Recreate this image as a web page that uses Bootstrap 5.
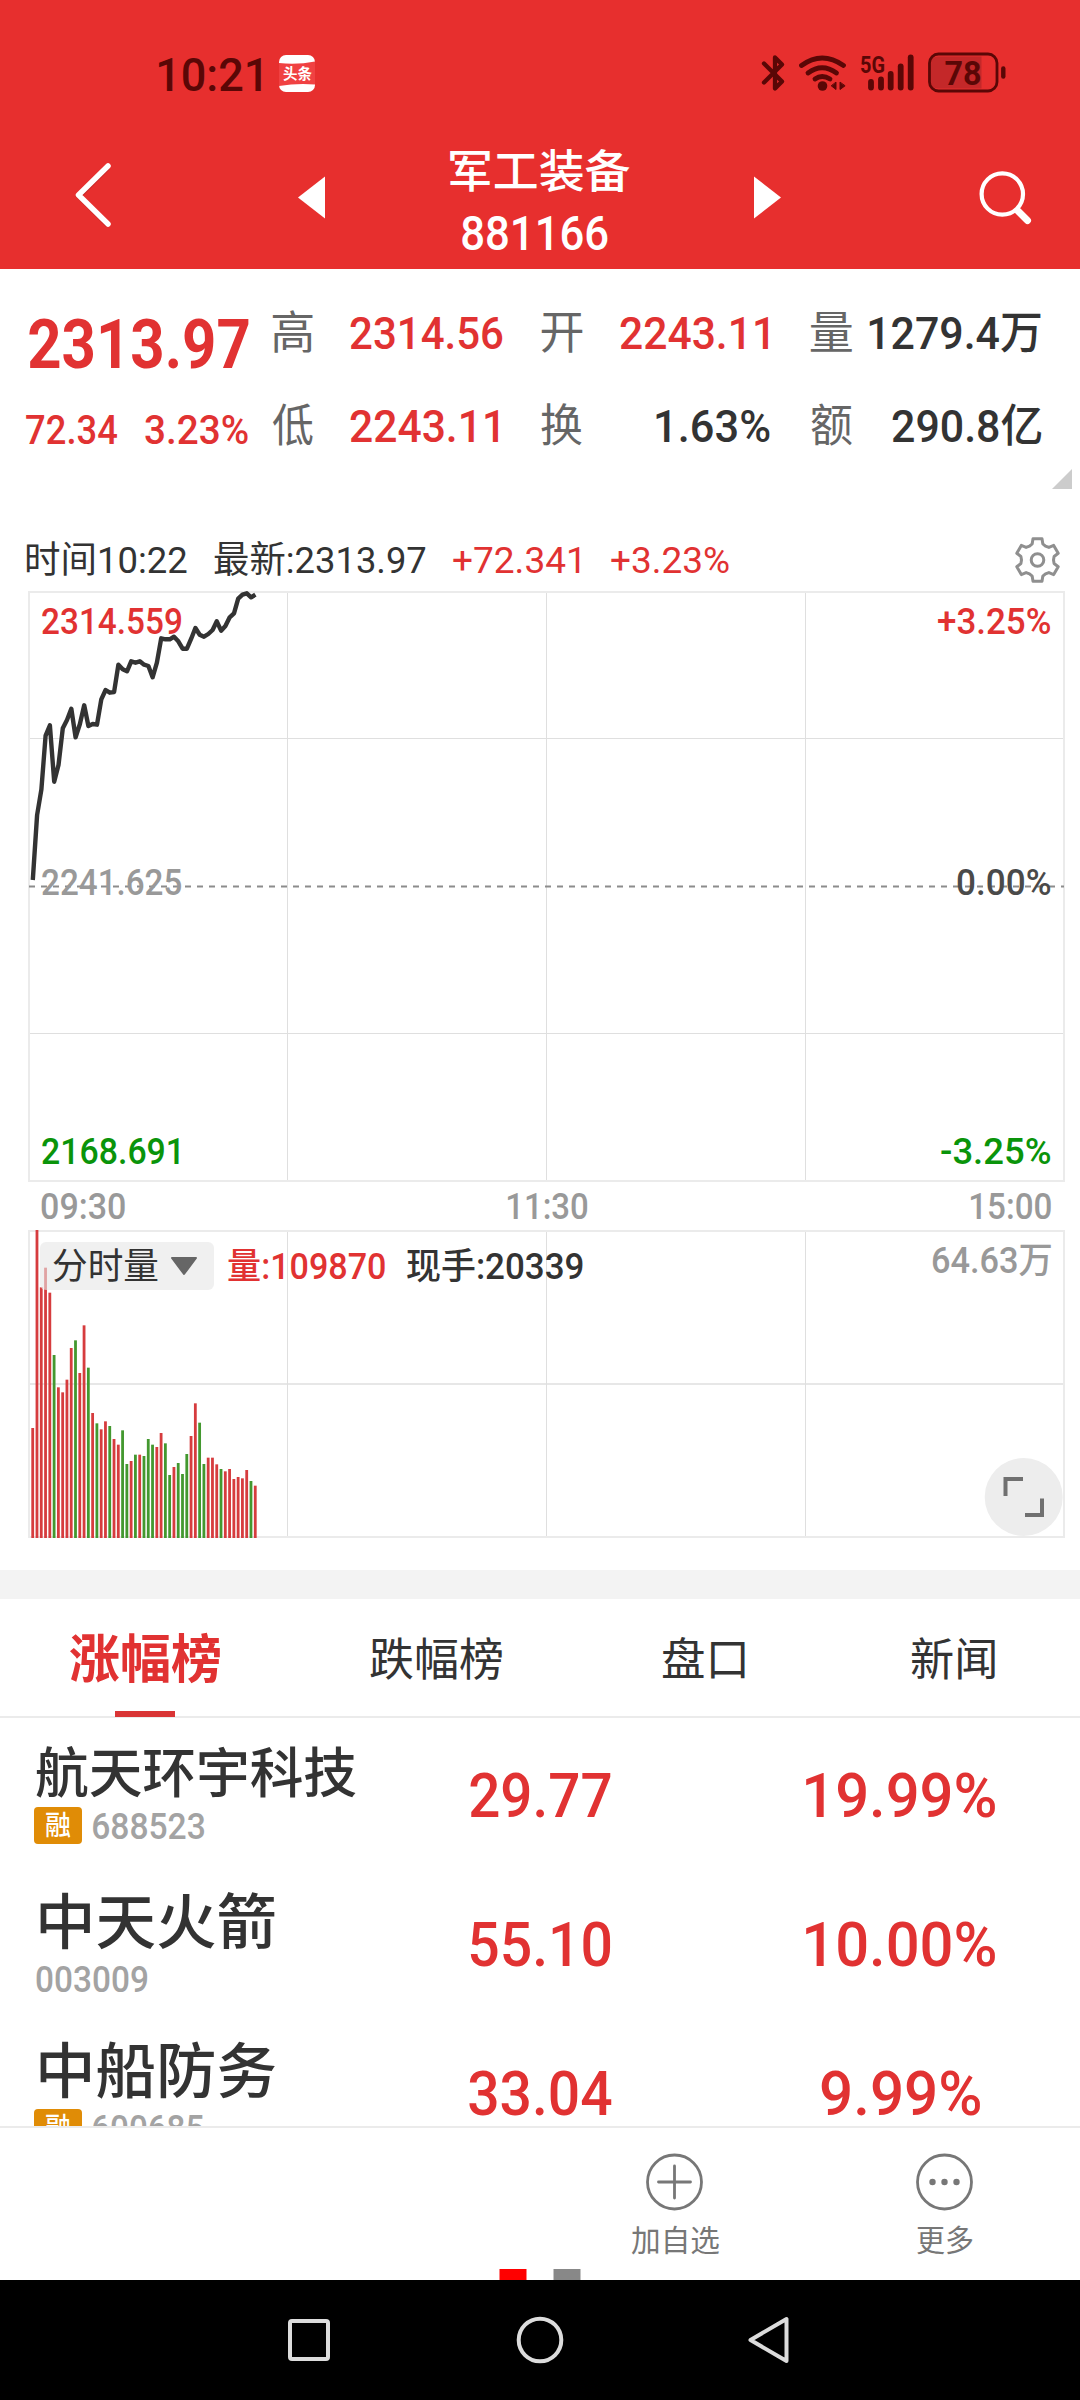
<!DOCTYPE html>
<html lang="zh-CN">
<head>
<meta charset="utf-8">
<meta name="viewport" content="width=device-width, initial-scale=1">
<title>军工装备 881166</title>
<link rel="stylesheet" href="https://cdn.jsdelivr.net/npm/bootstrap@5.3.0/dist/css/bootstrap.min.css">
<style>
:root{--up:#e13232;--down:#0a940a;--ink:#333;--mute:#999;--rule:#e6e6e6}
body{width:1080px;height:2400px;margin:0;overflow:hidden;background:#fff;color:var(--ink);font-family:Roboto,"Noto Sans CJK SC",sans-serif;font-weight:500;line-height:1}
svg{display:block;flex:none}
.fit{display:block;flex:none;white-space:nowrap;height:1em;line-height:1em}
.fit>span{display:inline-block;transform-origin:0 50%}
.up{color:var(--up)}.down{color:var(--down)}.mute{color:var(--mute)}
.s30{font-size:30px}.s36{font-size:36px}.s37{font-size:37px}.s41{font-size:41px}.s45{font-size:45px}.s47{font-size:47px}.s48{font-size:48px}.s52{font-size:52px}.s54{font-size:54px}.s60{font-size:60px}.s62{font-size:62px}.s68{font-size:68px}
.topbar{height:269px;background:#e72f2e}
.statusbar{height:146px;color:#5a0706;padding-left:158px;padding-right:74px}
.toutiao{margin-left:18px}
.toolrow{padding-top:1px}
.title-col{width:280px}
.title-col .name-line{height:48px}
.title-col .code-line{height:62px;margin-top:7px;padding-right:11px}
.quote{height:262px;padding-top:42px}
.price-col{width:273px;padding-left:26px}
.price-line{height:66px}.change-line{height:104px;gap:27px}
.pair-col{width:231px;margin-right:39px}
.pair-col:last-child{margin-right:0}
.pair-col>div{height:42px}
.pair-col>div+div{margin-top:51px}
.lbl{color:#666;font-weight:400}
.corner{right:8px;top:200px}
.info{height:61px;padding-left:26px;padding-right:19px;padding-bottom:4px}
.over{position:absolute;inset:0;font-size:36px}
.charts{height:978px}
.chip{width:174px;height:48px;border-radius:6px;background:rgba(230,230,230,.6);padding-left:13px;gap:12px;font-weight:400}
.band{height:29px;background:#f3f3f3}
.tabs{height:119px;border-bottom:2px solid #ebebeb}
.tabs>div{height:118px;position:relative;padding-top:4px}
.tabs .on::after{content:"";position:absolute;left:45px;bottom:0;width:60px;height:6px;background:#d93435}
.stocks{height:408px;overflow:hidden}
.stock{height:149px}
.c-name{width:470px;padding-left:34px;padding-top:28px}
.c-name .n{height:56px;font-weight:500}
.c-name .m{height:37px;gap:11px;margin-top:5px;color:#a3a3a3}
.c-name .m>.fit{margin-top:1px}
.stock.big .c-name{padding-top:26px}
.stock.big .n{height:60px}
.stock.big .m{margin-top:7px}
.rong{width:48px;height:37px;background:#e08c06;border-radius:4px;color:#fff;font-size:27px}
.c-num{height:153px}
.c-price{width:141px}
.c-pct{width:264px;margin-left:157px}
.toolbar2{height:154px;border-top:2px solid #ebebeb;color:#777;font-weight:400}
.toolbar2 .act{width:270px;padding-top:25px}
.toolbar2 .fit{margin-top:14px}
.sysnav{height:120px;background:#000}
</style>
</head>
<body>
<header class="topbar text-white">
  <div class="statusbar d-flex align-items-center">
    <span class="fit s47" data-w="103">10:21</span>
    <svg class="toutiao" width="37" height="37" viewBox="0 0 37 37"><rect width="36" height="37" rx="7" fill="#fff"/><path d="M0 8Q18 10 36 6.500V29.500Q18 28 0 31Z" fill="#f04142"/><text x="4" y="24" font-size="14.500" font-weight="700" textLength="29" lengthAdjust="spacingAndGlyphs" fill="#fff" font-family="Noto Sans CJK SC">头条</text></svg>
    <svg class="ms-auto" width="246" height="44" viewBox="760 51.500 246 44" fill="none" stroke="#5a0706" stroke-linecap="round" stroke-linejoin="round">
      <path d="M764 64L782 82L775 89V58L782 65L764 83" stroke-width="4.300"/>
      <g stroke-width="4.800"><path d="M801.500 66Q822 51 843.500 66"/><path d="M808 73.500Q822 63 836.500 73.500"/><path d="M815 79.500Q822 74.500 830 79.500"/></g>
      <circle cx="822.500" cy="86.500" r="4.800" fill="#5a0706" stroke="none"/>
      <path d="M836 83V90L831.500 86.500ZM840 83V90L844.800 86.500Z" fill="#5a0706" stroke-width="1"/>
      <text x="860" y="73" font-size="24" font-weight="700" textLength="25" lengthAdjust="spacingAndGlyphs" fill="#5a0706" stroke="none" font-family="Roboto">5G</text>
      <g stroke-width="5.800"><path d="M871 82.500V88"/><path d="M881 80V88"/><path d="M890.700 74.500V88"/><path d="M900.700 67V88"/><path d="M910.700 58V88"/></g>
      <path d="M938 57H981.500V89H938Q931 89 931 82V64Q931 57 938 57Z" fill="#c42829" stroke="none"/>
      <rect x="929.500" y="54.500" width="67.500" height="37" rx="9" stroke-width="2.800"/>
      <path d="M1003.300 69V77" stroke-width="4.400"/>
      <text x="944.500" y="85" font-size="34" font-weight="700" textLength="37" lengthAdjust="spacingAndGlyphs" fill="#5a0706" stroke="none" font-family="Roboto">78</text>
    </svg>
  </div>
  <div class="toolrow d-flex align-items-start">
    <svg width="180" height="100" viewBox="0 147 180 100"><path d="M108 167L79 196L108 225" fill="none" stroke="#8a1414" stroke-opacity=".35" stroke-width="5.500"/><path d="M108 166L78.500 195L108 224" fill="none" stroke="#fff" stroke-width="5.500" stroke-linecap="round" stroke-linejoin="round"/></svg>
    <svg width="220" height="100" viewBox="180 147 220 100"><path d="M298 197.500L325 176.500V218.500Z" fill="#fff"/></svg>
    <div class="title-col">
      <div class="name-line d-flex align-items-center justify-content-center"><span class="fit s45" data-w="180.500">军工装备</span></div>
      <div class="code-line d-flex align-items-center justify-content-center"><span class="fit s48" data-w="146">881166</span></div>
    </div>
    <svg width="200" height="100" viewBox="680 147 200 100"><path d="M781 197.500L754 176.500V218.500Z" fill="#fff"/></svg>
    <svg width="200" height="100" viewBox="880 147 200 100" fill="none" stroke="#fff"><circle cx="1002.300" cy="194" r="20.700" stroke-width="4.200"/><path d="M1018 211L1027.500 220.500" stroke-width="7" stroke-linecap="round"/></svg>
  </div>
</header>

<section class="quote d-flex align-items-start position-relative">
  <div class="price-col">
    <div class="price-line d-flex align-items-center"><span class="fit s68 up fw-bold" data-w="220" data-x="2.500">2313.97</span></div>
    <div class="change-line d-flex align-items-center up"><span class="fit s41" data-w="91.500">72.34</span><span class="fit s41" data-w="103">3.23%</span></div>
  </div>
  <div class="pair-col">
    <div class="d-flex align-items-center justify-content-between"><span class="fit s45 lbl" data-w="41">高</span><span class="fit s45 up" data-w="152.500">2314.56</span></div>
    <div class="d-flex align-items-center justify-content-between"><span class="fit s45 lbl" data-w="41">低</span><span class="fit s45 up me-1" data-w="148">2243.11</span></div>
  </div>
  <div class="pair-col">
    <div class="d-flex align-items-center justify-content-between"><span class="fit s45 lbl" data-w="41">开</span><span class="fit s45 up me-1" data-w="148">2243.11</span></div>
    <div class="d-flex align-items-center justify-content-between"><span class="fit s45 lbl" data-w="41">换</span><span class="fit s45" data-w="114" style="margin-right:2px">1.63%</span></div>
  </div>
  <div class="pair-col">
    <div class="d-flex align-items-center justify-content-between"><span class="fit s45 lbl" data-w="41">量</span><span class="fit s45" data-w="172">1279.4万</span></div>
    <div class="d-flex align-items-center justify-content-between"><span class="fit s45 lbl" data-w="41">额</span><span class="fit s45" data-w="149.500">290.8亿</span></div>
  </div>
  <svg class="corner position-absolute" width="20" height="20"><path d="M20 0V20H0Z" fill="#ccc"/></svg>
</section>

<section class="info d-flex align-items-center fw-normal">
  <span class="fit s37" data-w="161">时间10:22</span>
  <span class="fit s37" data-w="212" style="margin-left:27px">最新:2313.97</span>
  <span class="fit s37 up" data-w="127" style="margin-left:27px">+72.341</span>
  <span class="fit s37 up" data-w="118" style="margin-left:31px">+3.23%</span>
  <svg class="ms-auto" width="47" height="47" viewBox="-23.500 -24 47 47" fill="none" stroke="#8f8f8f" stroke-width="3" stroke-linejoin="round"><circle r="6.300"/><path id="gear"/></svg>
</section>

<section class="charts position-relative">
  <svg id="chart" width="1080" height="978" viewBox="0 592 1080 978" overflow="visible"></svg>
  <div class="over d-flex flex-column">
    <div class="d-flex justify-content-between" style="padding:11px 30px 0 42px"><span class="fit up" data-w="139.500">2314.559</span><span class="fit up" data-w="112">+3.25%</span></div>
    <div class="d-flex justify-content-between" style="padding:225px 30px 0 42px"><span class="fit mute" data-w="139">2241.625</span><span class="fit" data-w="93" style="color:#4a4a4a">0.00%</span></div>
    <div class="d-flex justify-content-between" style="padding:233px 30px 0 42px"><span class="fit down" data-w="137">2168.691</span><span class="fit down" data-w="109">-3.25%</span></div>
    <div class="d-flex justify-content-between mute" style="padding:19px 29px 0 41px"><span class="fit" data-w="84">09:30</span><span class="fit" data-w="80.500">11:30</span><span class="fit" data-w="81">15:00</span></div>
    <div class="d-flex align-items-center" style="padding:18px 29px 0 40px">
      <div class="chip d-flex align-items-center"><span class="fit" data-w="105">分时量</span><svg width="28" height="19"><path d="M2 1H26L14 17Z" fill="#666" stroke="#666" stroke-width="2" stroke-linejoin="round"/></svg></div>
      <span class="fit up" data-w="157" style="margin-left:14px">量:109870</span>
      <span class="fit" data-w="176" style="margin-left:22px">现手:20339</span>
      <span class="fit mute ms-auto" data-w="118" style="margin-bottom:12px">64.63万</span>
    </div>
  </div>
</section>
<div class="band"></div>

<nav class="tabs d-flex align-items-center">
  <div class="on d-flex align-items-center up fw-bold" style="margin-left:70px"><span class="fit s52" data-w="150">涨幅榜</span></div>
  <div class="d-flex align-items-center fw-normal" style="margin-left:150px"><span class="fit s45" data-w="132">跌幅榜</span></div>
  <div class="d-flex align-items-center fw-normal" style="margin-left:161px"><span class="fit s45" data-w="82">盘口</span></div>
  <div class="d-flex align-items-center fw-normal" style="margin-left:166px"><span class="fit s45" data-w="84.500">新闻</span></div>
</nav>

<section class="stocks">
  <div class="stock d-flex">
    <div class="c-name"><div class="n d-flex align-items-center"><span class="fit s54" data-w="320" data-x="2">航天环宇科技</span></div>
      <div class="m d-flex align-items-center"><span class="rong d-flex align-items-center justify-content-center"><span class="fit" data-w="25">融</span></span><span class="fit s36" data-w="111.500">688523</span></div></div>
    <div class="c-num d-flex align-items-center up"><div class="c-price d-flex justify-content-center"><span class="fit s62" data-w="140.500">29.77</span></div><div class="c-pct d-flex justify-content-center"><span class="fit s62" data-w="189">19.99%</span></div></div>
  </div>
  <div class="stock big d-flex">
    <div class="c-name"><div class="n d-flex align-items-center"><span class="fit s60" data-w="235" data-x="6">中天火箭</span></div>
      <div class="m d-flex align-items-center"><span class="fit s36" data-w="111.500" data-x="1.500">003009</span></div></div>
    <div class="c-num d-flex align-items-center up"><div class="c-price d-flex justify-content-center"><span class="fit s62" data-w="141">55.10</span></div><div class="c-pct d-flex justify-content-center"><span class="fit s62" data-w="189">10.00%</span></div></div>
  </div>
  <div class="stock big d-flex">
    <div class="c-name"><div class="n d-flex align-items-center"><span class="fit s60" data-w="235" data-x="6">中船防务</span></div>
      <div class="m d-flex align-items-center"><span class="rong d-flex align-items-center justify-content-center"><span class="fit" data-w="25">融</span></span><span class="fit s36" data-w="110">600685</span></div></div>
    <div class="c-num d-flex align-items-center up"><div class="c-price d-flex justify-content-center"><span class="fit s62" data-w="142.500">33.04</span></div><div class="c-pct d-flex justify-content-center"><span class="fit s62" data-w="159">9.99%</span></div></div>
  </div>
</section>

<footer>
  <div class="toolbar2 d-flex position-relative">
    <div class="act d-flex flex-column align-items-center" style="margin-left:540px">
      <svg width="58" height="58" viewBox="-28.500 -29 58 58" fill="none" stroke="#777" stroke-width="2.800"><circle r="27"/><path d="M-16 0H16M0 -16V16" stroke-linecap="round"/></svg>
      <span class="fit s30" data-w="88">加自选</span>
    </div>
    <div class="act d-flex flex-column align-items-center">
      <svg width="58" height="58" viewBox="-28.500 -29 58 58" fill="#777"><circle r="27" fill="none" stroke="#777" stroke-width="2.800"/><circle cx="-12" r="3.200"/><circle r="3.200"/><circle cx="12" r="3.200"/></svg>
      <span class="fit s30" data-w="56">更多</span>
    </div>
    <svg class="position-absolute bottom-0 start-50 translate-middle-x" width="82" height="11"><path d="M0.500 0h27v11h-27z" fill="#f00"/><path d="M54.500 0h27v11h-27z" fill="#888"/></svg>
  </div>
  <div class="sysnav d-flex">
    <svg width="1080" height="120" viewBox="0 2280 1080 120" fill="none" stroke="#dcdcdc" stroke-width="4" stroke-linejoin="round"><rect x="290" y="2321" width="38" height="38" rx="2"/><circle cx="540" cy="2340" r="21.300"/><path d="M786.500 2319V2361L750.500 2340Z"/></svg>
  </div>
</footer>
<script src="https://cdn.jsdelivr.net/npm/bootstrap@5.3.0/dist/js/bootstrap.bundle.min.js"></script>
<script>
// Condense each label so its drawn width equals data-w; data-x adds a left bearing.
const ctx = document.createElement('canvas').getContext('2d');
document.querySelectorAll('.fit').forEach(el => {
  const cs = getComputedStyle(el), t = el.textContent, w = +el.dataset.w, x = +(el.dataset.x || 0);
  ctx.font = `${cs.fontWeight} ${cs.fontSize} ${cs.fontFamily}`;
  const m = ctx.measureText(t), l = m.actualBoundingBoxLeft, r = m.actualBoundingBoxRight, k = w / (l + r);
  const s = document.createElement('span');
  s.textContent = t;
  s.style.transform = `translate(${l * k}px,1px) scaleX(${k})`;
  el.replaceChildren(s);
  el.style.width = w + 'px';
  if (x) el.style.marginLeft = x + 'px';
});

// Six-toothed gear outline
(() => {
  const P = (r, a) => { a = a * Math.PI / 180; return (r * Math.cos(a)).toFixed(1) + ' ' + (r * Math.sin(a)).toFixed(1); };
  let d = '';
  for (let i = 0; i < 6; i++) {
    const a = -90 + i * 60;
    d += (i ? 'L' : 'M') + P(17, a - 18) + 'L' + P(21.8, a - 12) + 'L' + P(21.8, a + 12) + 'L' + P(17, a + 18) + 'L' + P(16, a + 30);
  }
  document.getElementById('gear').setAttribute('d', d + 'Z');
})();

// Intraday price line (y per minute) and volume bars (top y per minute, sign marks falling minutes)
const price = [880,815,789.3,735.7,725.3,781.7,765,728.3,720,708.7,737.3,724,705.3,726,724,724.7,699.3,690,692.7,692,664.7,669.3,671.3,661.3,662.7,661.3,664.7,666,677.3,662.7,638.3,639.3,639.3,636.7,641.3,648.7,648.7,638.7,628,634.7,636.7,634,630,621.3,630.7,626,617.3,613.3,598.7,594.7,593.3,597.3,594.7];
const vols = [624,30,202,143,218,-405,502,517,479,384,-361,459,316,-443,579,-610,628,604,-618,657,674,-631,-732,723,-704,704,-708,-657,-674,681,639,-670,-765,741,-729,-762,-702,648,550,-608,-732,713,713,733,-747,754,747,777,771,775,750,-783,797];
const X = i => 32.8 + i * 4.28;
let g = '';
const line = (x1, y1, x2, y2, w = 1) => g += `<path d="M${x1} ${y1}L${x2} ${y2}" stroke="#dfdfdf" stroke-width="${w}"/>`;
[287.5, 546.5, 805.5].forEach(x => { line(x, 592, x, 1181); line(x, 1231, x, 1537); });
line(29, 738.5, 1064, 738.5); line(29, 1033.5, 1064, 1033.5); line(29, 1384, 1064, 1384, 1.3);
g += `<g fill="none" stroke="#ebebeb" stroke-width="2"><rect x="29" y="592" width="1035" height="589"/><rect x="29" y="1231" width="1035" height="306"/></g>`;
g += `<path d="M29 886.500H1064" stroke="#8c8c8c" stroke-width="2" stroke-dasharray="6 6"/>`;
vols.forEach((v, i) => { const y = 1220 + Math.abs(v) / 3; g += `<rect x="${X(i) - 1.5}" y="${y}" width="2.800" height="${1538 - y}" fill="${v < 0 ? '#43982f' : '#d63c3e'}"/>`; });
g += `<polyline points="${price.map((y, i) => X(i).toFixed(1) + ',' + y).join(' ')}" fill="none" stroke="#333" stroke-width="4.400" stroke-linejoin="round"/>`;
g += `<circle cx="1023.700" cy="1497" r="39" fill="#ededed"/><path d="M1005.500 1496V1479H1023M1042 1498.500V1515H1025" fill="none" stroke="#707070" stroke-width="4"/>`;
document.getElementById('chart').innerHTML = g;
</script>
</body>
</html>
